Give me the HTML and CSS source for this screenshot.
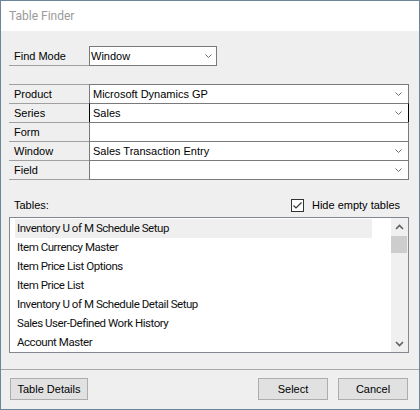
FILE: index.html
```html
<!DOCTYPE html>
<html>
<head>
<meta charset="utf-8">
<link rel="stylesheet" href="styles.css">
</head>
<body>
<div class="window">
  <div class="titlebar"><span class="title">Table Finder</span></div>
  <div class="content">
    <div class="mode-row">
      <div class="mode-label">Find Mode</div>
      <div class="mode-select">
        <span class="value">Window</span>
        <svg class="chev" width="7" height="4" viewBox="0 0 7 4"><polyline points="0.5,0.5 3.5,3.5 6.5,0.5" fill="none" stroke="#6e6e6e" stroke-width="1"/></svg>
      </div>
    </div>

    <div class="grid">
      <div class="grow">
        <div class="glabel">Product</div>
        <div class="gcell"><span class="value">Microsoft Dynamics GP</span>
          <svg class="chev" width="7" height="4" viewBox="0 0 7 4"><polyline points="0.5,0.5 3.5,3.5 6.5,0.5" fill="none" stroke="#6e6e6e" stroke-width="1"/></svg></div>
      </div>
      <div class="grow">
        <div class="glabel">Series</div>
        <div class="gcell focus"><span class="value">Sales</span>
          <svg class="chev" width="7" height="4" viewBox="0 0 7 4"><polyline points="0.5,0.5 3.5,3.5 6.5,0.5" fill="none" stroke="#6e6e6e" stroke-width="1"/></svg></div>
      </div>
      <div class="grow">
        <div class="glabel">Form</div>
        <div class="gcell"><span class="value"></span></div>
      </div>
      <div class="grow">
        <div class="glabel">Window</div>
        <div class="gcell"><span class="value">Sales Transaction Entry</span>
          <svg class="chev" width="7" height="4" viewBox="0 0 7 4"><polyline points="0.5,0.5 3.5,3.5 6.5,0.5" fill="none" stroke="#6e6e6e" stroke-width="1"/></svg></div>
      </div>
      <div class="grow last">
        <div class="glabel">Field</div>
        <div class="gcell"><span class="value"></span>
          <svg class="chev" width="7" height="4" viewBox="0 0 7 4"><polyline points="0.5,0.5 3.5,3.5 6.5,0.5" fill="none" stroke="#6e6e6e" stroke-width="1"/></svg></div>
      </div>
    </div>

    <div class="tables-head">
      <span class="tables-label">Tables:</span>
      <div class="check">
        <span class="box"><svg width="11" height="11" viewBox="0 0 11 11"><polyline points="1.5,5.5 4,8 9.5,2.5" fill="none" stroke="#333" stroke-width="1.2"/></svg></span>
        <span>Hide empty tables</span>
      </div>
    </div>

    <div class="list">
      <div class="items">
        <div class="item selected">Inventory U of M Schedule Setup</div>
        <div class="item">Item Currency Master</div>
        <div class="item">Item Price List Options</div>
        <div class="item">Item Price List</div>
        <div class="item">Inventory U of M Schedule Detail Setup</div>
        <div class="item">Sales User-Defined Work History</div>
        <div class="item">Account Master</div>
      </div>
      <div class="scrollbar">
        <div class="sb-btn"><svg width="9" height="6" viewBox="0 0 9 6"><polyline points="1,5 4.5,1.5 8,5" fill="none" stroke="#606060" stroke-width="1.6"/></svg></div>
        <div class="track"><div class="thumb"></div></div>
        <div class="sb-btn"><svg width="9" height="6" viewBox="0 0 9 6"><polyline points="1,1 4.5,4.5 8,1" fill="none" stroke="#606060" stroke-width="1.6"/></svg></div>
      </div>
    </div>
  </div>

  <div class="sep"></div>

  <div class="buttons">
    <button class="btn btn-details">Table Details</button>
    <div class="spacer"></div>
    <button class="btn">Select</button>
    <button class="btn">Cancel</button>
  </div>
</div>
</body>
</html>
```

FILE: styles.css
```css
html, body {
  margin: 0;
  padding: 0;
  background: #efefef;
}

.window {
  width: 420px;
  height: 410px;
  box-sizing: border-box;
  border: 1px solid #6b8599;
  background: #efefef;
  display: flex;
  flex-direction: column;
  font-family: "Liberation Sans", Arial, sans-serif;
  font-size: 11px;
  color: #000;
}

.titlebar {
  height: 30px;
  background: #fff;
  display: flex;
  align-items: center;
  padding-left: 8px;
}

.title {
  font-family: Roboto, "Liberation Sans", sans-serif;
  font-size: 12px;
  color: #9a9a9a;
  margin-top: -1px;
}

.content {
  padding: 0 10px 0 8px;
  display: flex;
  flex-direction: column;
}

.mode-row {
  margin-top: 15px;
  height: 20px;
  display: flex;
}

.mode-label {
  width: 80px;
  box-sizing: border-box;
  border-bottom: 1px solid #a0a0a0;
  padding-left: 5px;
  display: flex;
  align-items: center;
}

.mode-select {
  width: 128px;
  box-sizing: border-box;
  border: 1px solid #7a7a7a;
  background: #fff;
  display: flex;
  align-items: center;
  padding-left: 1px;
  padding-right: 4px;
}

.value {
  flex: 1;
  white-space: nowrap;
}

.grid {
  margin-top: 18px;
  display: flex;
  flex-direction: column;
  width: 400px;
}

.grow {
  display: flex;
  height: 19px;
}

.glabel {
  width: 80px;
  box-sizing: border-box;
  border-top: 1px solid #a0a0a0;
  padding-left: 5px;
  display: flex;
  align-items: center;
}

.gcell {
  flex: 1;
  box-sizing: border-box;
  border-top: 1px solid #7a7a7a;
  border-left: 1px solid #7a7a7a;
  border-right: 1px solid #7a7a7a;
  background: #fff;
  display: flex;
  align-items: center;
  padding-left: 3px;
  padding-right: 6px;
}

.gcell.focus {
  border-left-color: #000;
  border-right-color: #000;
}

.grow.last {
  height: 20px;
}

.grow.last .glabel {
  border-bottom: 1px solid #a0a0a0;
}

.grow.last .gcell {
  border-bottom: 1px solid #7a7a7a;
}

.chev {
  display: block;
  flex: none;
}

.tables-head {
  margin-top: 17px;
  height: 16px;
  display: flex;
  align-items: center;
  justify-content: space-between;
  padding-left: 5px;
  padding-right: 9px;
}

.check {
  display: flex;
  align-items: center;
  gap: 8px;
}

.box {
  width: 13px;
  height: 13px;
  box-sizing: border-box;
  border: 1px solid #333;
  background: #fff;
  display: flex;
  align-items: center;
  justify-content: center;
}

.box svg {
  display: block;
}

.list {
  margin-top: 4px;
  width: 400px;
  height: 136px;
  box-sizing: border-box;
  border: 1px solid #828790;
  background: #fff;
  display: flex;
}

.items {
  flex: 1;
  padding: 1px 0 0 5px;
  overflow: hidden;
}

.item {
  width: 357px;
  height: 19px;
  line-height: 19px;
  padding-left: 2px;
  box-sizing: border-box;
  font-family: Roboto, "Liberation Sans", sans-serif;
  font-size: 11.5px;
  letter-spacing: -0.45px;
  color: #111;
  white-space: nowrap;
}

.item.selected {
  background: #efefef;
}

.scrollbar {
  width: 17px;
  background: #f0f0f0;
  display: flex;
  flex-direction: column;
}

.sb-btn {
  height: 17px;
  display: flex;
  align-items: center;
  justify-content: center;
}

.sb-btn svg {
  display: block;
}

.track {
  flex: 1;
  padding: 1px 1px 0 0;
}

.thumb {
  height: 17px;
  background: #cdcdcd;
}

.sep {
  margin-top: 16px;
  height: 1px;
  background: #a9a9a9;
}

.buttons {
  margin-top: 8px;
  display: flex;
  padding: 0 11px 0 9px;
  gap: 10px;
}

.spacer {
  flex: 1;
}

.btn {
  height: 22px;
  width: 70px;
  box-sizing: border-box;
  border: 1px solid #adadad;
  background: #e1e1e1;
  font-family: "Liberation Sans", Arial, sans-serif;
  font-size: 11px;
  color: #000;
  padding: 0;
  margin: 0;
}

.btn-details {
  width: 78px;
}
```
